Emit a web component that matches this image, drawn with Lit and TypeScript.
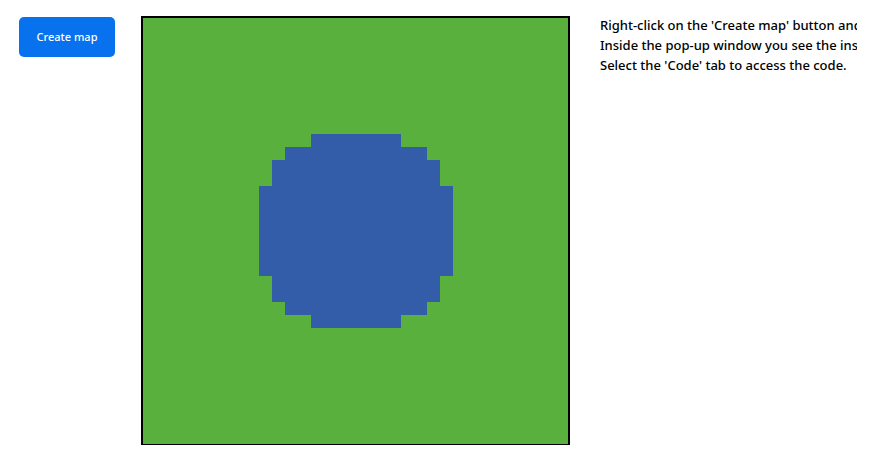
import { LitElement, html, css, svg } from "lit";
import { customElement } from "lit/decorators.js";

// Bands of the lake, from top to bottom, in map units.
const LAKE = [
  { x: 170, y: 118, w: 90, h: 13 },
  { x: 144, y: 131, w: 142, h: 13 },
  { x: 131, y: 144, w: 168, h: 26 },
  { x: 118, y: 170, w: 194, h: 90 },
  { x: 131, y: 260, w: 168, h: 26 },
  { x: 144, y: 286, w: 142, h: 13 },
  { x: 170, y: 299, w: 90, h: 13 },
];

@customElement("world-map")
export class WorldMap extends LitElement {
  static styles = css`
    :host { display: block; }
    .map { display: block; width: 100%; height: auto; }
    .frame { fill: #000; }
    .land { fill: #59b03c; }
    .lake { fill: #345da9; }
  `;

  render() {
    return html`
      <svg class="map" viewBox="0 0 429 429" shape-rendering="crispEdges" role="img" aria-label="Map">
        <rect class="frame" width="429" height="429"></rect>
        <rect class="land" x="2" y="2" width="425" height="426"></rect>
        ${LAKE.map((b) => svg`<rect class="lake" x=${b.x} y=${b.y} width=${b.w} height=${b.h}></rect>`)}
      </svg>
    `;
  }
}

@customElement("app-root")
export class AppRoot extends LitElement {
  static styles = css`
    :host {
      display: block;
      background: #fff;
      color: #000;
      font-family: "Noto Sans", "Open Sans", sans-serif;
    }
    .page {
      display: flex;
      align-items: flex-start;
      padding: 15px 24px 20px 19px;
    }
    .create {
      flex: none;
      width: 96px;
      height: 40px;
      margin: 2px 26px 0 0;
      padding: 0;
      border: 0;
      border-radius: 5px;
      background: #0771ee;
      color: #fff;
      font: 500 11px/20px "Noto Sans", "Open Sans", sans-serif;
    }
    .world {
      flex: 0 1 429px;
      margin-top: 1px;
    }
    .notes {
      flex: 1;
      min-width: 0;
      margin-left: 30px;
      overflow: hidden;
      white-space: nowrap;
      font-size: 13px;
      font-weight: 500;
      line-height: 20px;
    }
    .notes p { margin: 0; }
  `;

  render() {
    return html`
      <main class="page">
        <button class="create" type="button">Create map</button>
        <world-map class="world"></world-map>
        <section class="notes">
          <p>Right-click on the 'Create map' button and</p>
          <p>Inside the pop-up window you see the ins</p>
          <p>Select the 'Code' tab to access the code.</p>
        </section>
      </main>
    `;
  }
}
